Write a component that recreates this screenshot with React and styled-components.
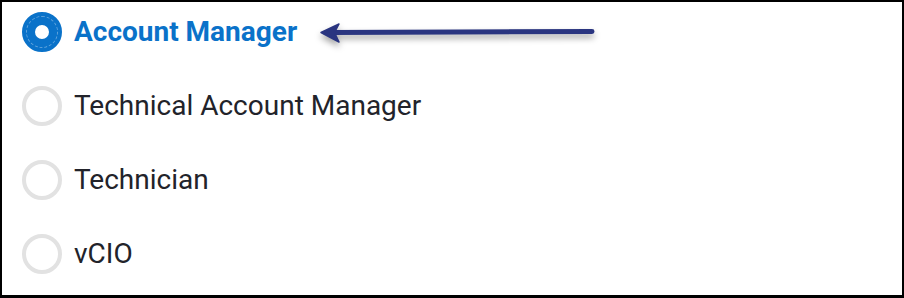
import React from "react";
import styled, { createGlobalStyle } from "styled-components";

const Global = createGlobalStyle`
  html, body { margin: 0; padding: 0; background: #fff; }
  * { box-sizing: border-box; }
`;

const Frame = styled.div`
  position: relative;
  width: 904px;
  height: 298px;
  border: 2px solid #000;
  border-bottom-width: 3px;
  background: #fff;
  padding: 10px 20px 0 20px;
  display: flex;
  flex-direction: column;
  gap: 34px;
  font-family: Roboto, "Liberation Sans", Arial, sans-serif;
`;

const Option = styled.label`
  display: flex;
  align-items: center;
  gap: 12px;
  height: 40px;
  cursor: pointer;
`;

const Radio = styled.span`
  position: relative;
  flex: none;
  width: 40px;
  height: 40px;
  border-radius: 50%;
  background: #fff;
  border: ${(p) => (p.$checked ? "13px solid #0a72c9" : "4px solid #e2e2e2")};
  ${(p) =>
    p.$checked &&
    `
    &::after {
      content: "";
      position: absolute;
      inset: -9px;
      border-radius: 50%;
      border: 1px dashed rgba(255,255,255,0.35);
    }
  `}
`;

const Label = styled.span`
  font-size: 28px;
  line-height: 1.15;
  font-weight: ${(p) => (p.$checked ? 700 : 400)};
  color: ${(p) => (p.$checked ? "#0a72c9" : "#22232a")};
  white-space: nowrap;
`;

const Arrow = styled.svg`
  position: absolute;
  left: 314px;
  top: 18px;
  overflow: visible;
  filter: drop-shadow(0 4px 3px rgba(0, 0, 0, 0.35));
`;

const options = [
  { label: "Account Manager", checked: true },
  { label: "Technical Account Manager" },
  { label: "Technician" },
  { label: "vCIO" },
];

export default function App() {
  return (
    <>
      <Global />
      <Frame>
        {options.map((o) => (
          <Option key={o.label}>
            <Radio $checked={o.checked} />
            <Label $checked={o.checked}>{o.label}</Label>
          </Option>
        ))}
        <Arrow width="290" height="30" viewBox="0 0 290 30">
          <line x1="14" y1="12.5" x2="276" y2="11.5" stroke="#2a3580" strokeWidth="5" strokeLinecap="round" />
          <path d="M5 12.5 L23 4 L18.5 12.5 L23 22 Z" fill="#2a3580" stroke="#2a3580" strokeWidth="1.5" strokeLinejoin="round" />
        </Arrow>
      </Frame>
    </>
  );
}
